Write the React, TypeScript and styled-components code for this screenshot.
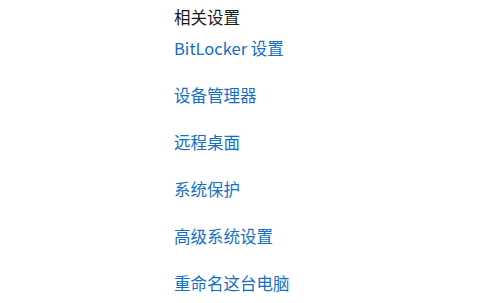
import styled, { createGlobalStyle } from 'styled-components';

const GlobalStyle = createGlobalStyle`
  html, body {
    margin: 0;
    padding: 0;
    background: #ffffff;
  }
  body {
    font-family: "Noto Sans CJK SC", "Noto Sans", sans-serif;
  }
`;

const Panel = styled.section`
  width: 478px;
  height: 303px;
  box-sizing: border-box;
  padding: 7px 0 0 174px;
  overflow: hidden;
`;

const Heading = styled.h2`
  margin: 0 0 11px;
  font-size: 16.5px;
  font-weight: 400;
  line-height: 20px;
  color: #1b1b1b;
`;

const LinkList = styled.ul`
  list-style: none;
  margin: 0;
  padding: 0;
  display: flex;
  flex-direction: column;
  gap: 27px;
`;

const SettingLink = styled.a`
  display: block;
  font-size: 16.5px;
  line-height: 20px;
  color: #1470c4;
  text-decoration: none;
  cursor: pointer;
`;

const links = [
  'BitLocker 设置',
  '设备管理器',
  '远程桌面',
  '系统保护',
  '高级系统设置',
  '重命名这台电脑',
];

export default function App() {
  return (
    <>
      <GlobalStyle />
      <Panel>
        <Heading>相关设置</Heading>
        <LinkList>
          {links.map((label) => (
            <li key={label}>
              <SettingLink>{label}</SettingLink>
            </li>
          ))}
        </LinkList>
      </Panel>
    </>
  );
}
